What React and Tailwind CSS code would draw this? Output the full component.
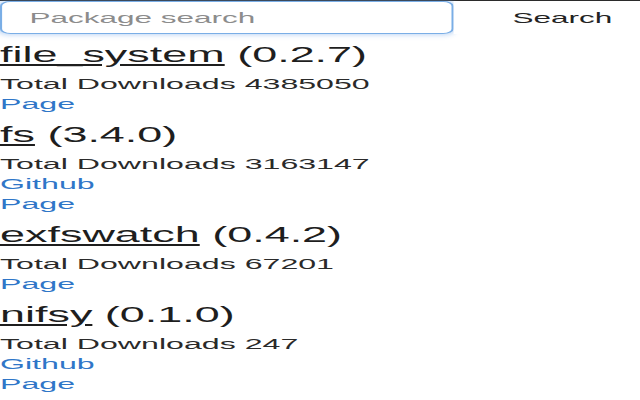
import { useState } from "react";

const packages = [
  { name: "file_system", version: "0.2.7", downloads: 4385050, github: false },
  { name: "fs", version: "3.4.0", downloads: 3163147, github: true },
  { name: "exfswatch", version: "0.4.2", downloads: 67201, github: false },
  { name: "nifsy", version: "0.1.0", downloads: 247, github: true },
];

const PackageItem = ({ pkg }) => (
  <div>
    <div className="pt-[3px] text-[21.4px] leading-[37px] text-[#1e1e1e]">
      <a href="#" className="underline decoration-[1.5px] underline-offset-2">
        {pkg.name}
      </a>{" "}
      ({pkg.version})
    </div>
    <div className="text-[15.3px] leading-[20px] text-[#2a2a2a]">
      Total Downloads {pkg.downloads}
    </div>
    {pkg.github && (
      <a href="#" className="block text-[15.3px] leading-[20px] text-[#2f76c8]">
        Github
      </a>
    )}
    <a href="#" className="block text-[15.3px] leading-[20px] text-[#2f76c8]">
      Page
    </a>
  </div>
);

export default function App() {
  const [query, setQuery] = useState("");

  return (
    <div className="w-screen h-[400px] overflow-hidden bg-white">
      {/* popup is rendered narrow and stretched like the screenshot */}
      <div
        className="w-[305px] origin-top-left scale-x-[2.1] border-t border-[#2b2b2b]"
        style={{ fontFamily: '"Liberation Sans", Arial, sans-serif' }}
      >
        <div className="flex items-center">
          <input
            value={query}
            onChange={(e) => setQuery(e.target.value)}
            placeholder="Package search"
            className="w-[216px] h-[33px] rounded-[5px] border border-[#7aaee6] bg-white pl-[13px] text-[15px] text-[#222] placeholder:text-[#8c8c8c] outline-none shadow-[0_0_4px_1px_rgba(110,165,230,0.45)]"
          />
          <button className="pl-[28px] text-[15px] leading-[33px] text-[#222] bg-white">
            Search
          </button>
        </div>
        {packages.map((pkg) => (
          <PackageItem key={pkg.name} pkg={pkg} />
        ))}
      </div>
    </div>
  );
}
